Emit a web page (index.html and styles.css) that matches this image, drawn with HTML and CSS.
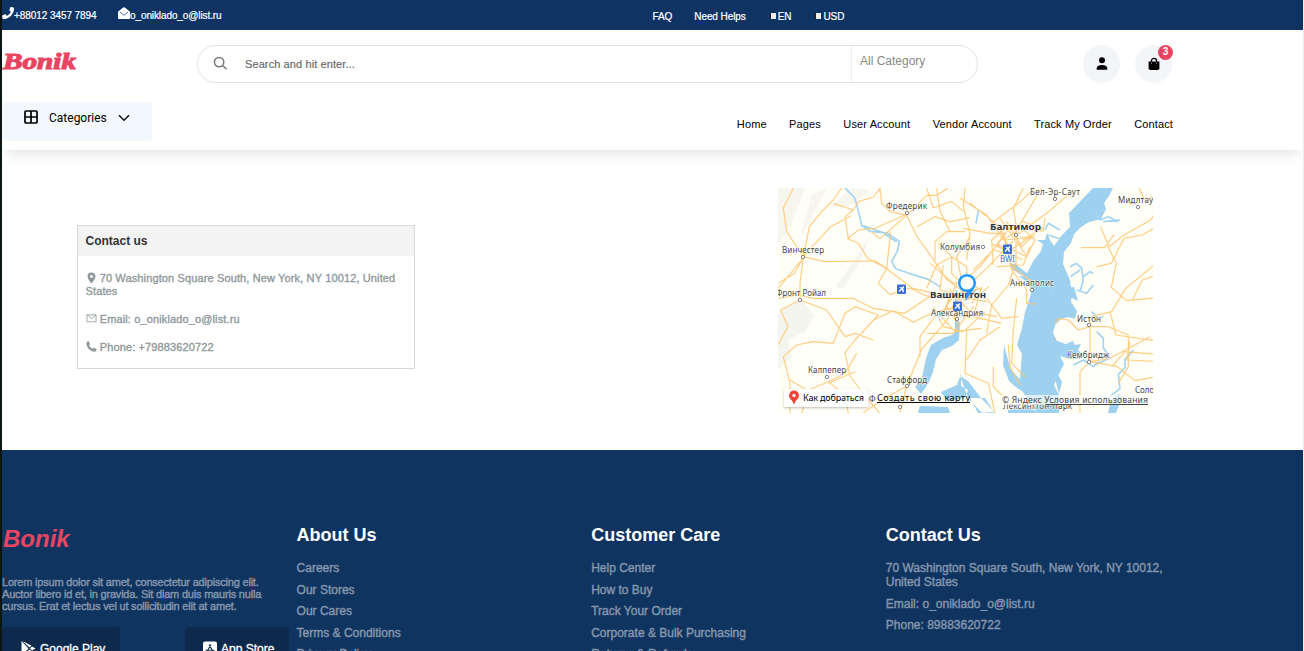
FILE: index.html
```html
<!DOCTYPE html>
<html lang="en">
<head>
<meta charset="utf-8">
<title>Bonik - Contact us</title>
<link rel="stylesheet" href="styles.css">
</head>
<body>
<div class="page">
  <div class="topbar">
    <div class="top-left">
      <span class="top-phone"><svg class="ic-phone" viewBox="0 0 512 512"><path fill="currentColor" d="M493 25 389 1c-11-3-23 3-27 14l-48 112c-4 10-2 22 7 29l60 49c-36 77-98 139-176 176l-49-60c-7-9-19-12-29-7L15 362C4 366-2 378 1 389l24 104c3 11 12 19 24 19 256 0 463-207 463-463 0-12-8-21-19-24z"/></svg><span>+88012 3457 7894</span></span>
      <span class="top-mail"><svg class="ic-open" viewBox="0 0 512 512"><path fill="currentColor" d="M0 200 190 40q66-60 132 0l190 160v270q0 42-42 42H42Q0 512 0 470z"/><path d="m90 220 135 110q31 24 62 0l135-110" fill="none" stroke="#0f3460" stroke-width="32"/></svg><span>o_oniklado_o@list.ru</span></span>
    </div>
    <div class="top-right"><span>FAQ</span><span>Need Helps</span><span class="flagged"><i></i>EN</span><span class="flagged"><i></i>USD</span></div>
  </div>
  <header class="header">
    <div class="head-row">
      <svg class="logo" viewBox="0 0 76 30"><text x="1" y="22" textLength="73" lengthAdjust="spacingAndGlyphs">Bonik</text></svg>
      <div class="search">
        <svg viewBox="0 0 16 16" class="ic-search"><circle cx="6.5" cy="6.5" r="5"/><path d="m10.2 10.2 4.2 4"/></svg>
        <span class="placeholder">Search and hit enter...</span>
        <span class="category">All Category</span>
      </div>
      <div class="actions">
        <span class="round"><svg viewBox="0 0 12 14"><circle cx="6" cy="3.3" r="3"/><path d="M.7 12.800v-1.300q0-3.600 5.300-3.600t5.300 3.600v1.300z"/></svg></span>
        <span class="round"><svg viewBox="0 0 12 14"><path d="M3.4 5.500V4a2.600 2.600 0 0 1 5.200 0v1.500" fill="none" stroke="#000" stroke-width="1.300"/><path d="M.6 4.500h10.800v6.700q0 1.800-1.800 1.800H2.400Q.6 13 .6 11.200z"/><path d="M3.500 5.500v1M8.500 5.500v1" stroke="#fff" stroke-width=".7"/></svg><b class="badge">3</b></span>
      </div>
    </div>
    <div class="nav-row">
      <div class="categories">
        <svg class="ic-grid" viewBox="0 0 14 14"><rect x="1" y="1" width="12" height="12" rx="1"/><path d="M7 1v12M1 7h12"/></svg>
        <span>Categories</span>
        <svg class="ic-chev" viewBox="0 0 12 8"><path d="m1 1.200 5 5 5-5"/></svg>
      </div>
      <nav class="nav"><span>Home</span><span>Pages</span><span>User Account</span><span>Vendor Account</span><span>Track My Order</span><span>Contact</span></nav>
    </div>
  </header>
  <main class="main">
    <section class="card">
      <h2>Contact us</h2>
      <div class="card-body">
        <p><svg class="ic-card" viewBox="0 0 11 13"><path fill="currentColor" fill-rule="evenodd" d="M5.500.5A4.300 4.300 0 0 0 1.200 4.800C1.200 7.500 5.500 12.500 5.500 12.500s4.300-5 4.300-7.700A4.300 4.300 0 0 0 5.500.5zm0 2.700a1.600 1.600 0 1 1 0 3.200 1.600 1.600 0 0 1 0-3.200z"/></svg> 70 Washington Square South, New York, NY 10012, United<br>States</p>
        <p><svg class="ic-card" viewBox="0 0 11 13"><path fill="none" stroke="currentColor" stroke-width=".9" d="M.6 2h9.800v7.500H.6zl4.900 4 4.900-4"/></svg> Email: o_oniklado_o@list.ru</p>
        <p><svg class="ic-card" viewBox="0 0 11 13"><path fill="currentColor" d="M.1 1.500Q1 0 2.400.2L4 3.400 2.700 4.600q1 2.200 3.600 3.700l1.300-1.200 3.300 1.700q.4 2.200-1.800 2.900C4.500 11.800-.6 6.800.1 1.500z"/></svg> Phone: +79883620722</p>
      </div>
    </section>
    <svg class="map" viewBox="778 188 375 225">
      <rect x="778" y="188" width="375" height="225" fill="#fffef7"/>
      <!-- hills -->
      <g transform="translate(770 180) scale(.33333)" class="hill">
        <path d="M24 24h80l-20 60-30 70-30 35zM125 45l45-20-30 60-30 55-20 35zM300 165l-45 75-60 80 25 5 50-80zM240 24l60 5-50 45-70 10z"/>
        <path d="M24 395l70-35 40 45-30 50-50 25 10 50-40 40z"/>
      </g>
      <!-- bay and rivers -->
      <g class="water">
        <path d="M1093 188h20l-4 8-5 7 2 6-5 10-12 3-8 5-7 7-3 9-7 9-1 12 7 16 2 14-1 8 6 9-2 8-7-2-7 2-6 6-2 8 4 8 9 3 7-3 3 8 7 5-5 5-8 0-10-3 4 8-5 10-5 11 5 10 0 20-1 10-14 0-4-10-11-12-7-13-2-13 2-23-5-9 5-17 3-16 4-12 3-10-4-10-8-6-7-4-4-7 6 1 12 9 7-13 7-9 2-7-6-4 8 0 2-7 3 7 4 6 8-11 8-8-1-14z"/>
        <path d="M1039 290l-6 1-7-10-8-5 9 1 7 6 6-1zM1051 290l10 12 9-5 8 4-4-14zM1060 352l-2-11 9 5 14-2-6 12-8 0zM1064 364l-7 9 5 9-3 12-5-20z"/>
        <path d="M955 320l5 2-1 18-7 6-10 4-6 9-3 13-5 12-7 10-6-7 7-9 4-20 5-13 12-7 9-3 3-3z"/>
        <path d="M1004 345l4 15 3 10 10 10 13 7 5 12-8-2-14-9-8-7-6-16zM941 392l16-7 4-11 0 12 7 4-3 8-18 3zM960 376l8 22 14 15 13 0-13-14-14-18zM970 398l15 0 9 14-16 1zM1008 410l20-3 12 6-32 0zM1108 413l3-13 8-6 3 4-6 15z"/>
        <path d="M920 406l28 1 2 6-32 0z"/>
      </g>
      <g transform="translate(770 180) scale(.33333)">
        <path class="river" style="stroke-width:5" d="M225 24l28 28 8 24 14 60 25 18 50 5 38 25-5 28-18 32 12 22 40 14 58 18 38 24M275 136l60 20 45 30M900 260l20-10 15 15 5 35-10 35M902 290l28-20M940 290l20-15 10 5M970 90l20 30 25-10 30 15M626 90l-8 40M965 395l20 20 15-6M980 455l20 20 0 28 20 30-40 20M910 555l30-15 30 20 15-15M1020 650l30-25-5-42 20-20 0-24 25-28M845 350l-5-45M560 330l-5 50 10 60M870 150l-35-20-10 20M880 180l-45-15M1000 125l50-5M920 330l30 10 20-25"/>
      </g>
      <!-- roads -->
      <g transform="translate(770 180) scale(.33333)" class="road">
        <path d="M70 24L40 85 50 155 100 230 118 140 155 95 190 60 215 24M24 310l50-30 26-50 82-90 60-32M24 326l78-95M100 230l65 15 150-2 35 22M190 70l60 20 15-25 45-14 20-25M250 90l-25 20 10 65 30-25 50-5 90-40M230 175l35 15 28 45 55 30M350 265l10-90 0-20M330 24l5 45 25 25 50 12M410 106l60-60 30 0 35-22M410 106l30 62 50 70 40 60 60 45M410 106l-80 70-25-20M440 140l55-30 45 15 60-12M350 265l-25 45 35 34 60-20 50 24 95 0M348 265l80 60 110 25M24 355l60-10 45 10 120 0 60 30 95 15 90-60 90 20M100 230l-10 80 0 50"/>
        <path d="M470 24l20 60 55-20 35 30M495 240l0-55 35-30 55 0M500 24l10 70 30 60M600 170l-40 60 15 70 60 30M505 190l40 40 0 50 35 35M470 325l30-70 45-25 45 30 0 70M480 250l70 60 60-10M520 255l-10 75 60 15"/>
        <path d="M590 240l10-80-20-80 5-56M570 55l80 50 50 75 38-25 75-130M740 165l90-65 80-70M740 145l-10-60 30-61M690 155l30 50 50 25 25-50-45-40-50 5zM590 320l60-55 80-82M580 305l50-45 75-95M700 160l25 110 45 60 0 40 30 2M680 260l80-5 20-55M600 70l70 55 30 30M670 255l-5-75 35-30M710 125l45 75 38-35M665 194l65 10 55-35M740 240l-25 75-50 60-15 85M690 215l50 55 60 45M740 145l80 8 5-39M580 145l80 15 45 0M665 130l80-60 50-46M610 270l60-60 20 5M758 180l60-35-65-22M707 180l75-10M727 135l-45 55 50 45M675 195l82 45M738 135l0 120M690 115l78 110"/>
        <path d="M1177 60l-35 60-80 45-45 35-25-60M1033 163l-30 40-70 0M1177 130l-60 35-55 10-38 75-44 10M1014 200l25 50-15 72 45 40 108-10M1177 235l-110 90-42 70-60 15M1177 280l-60 20-30 60M1108 24l15 35 54-18M1020 395l18 70 139 20M960 440l55 0 60 25 0 95-30 50M960 545l80 14 55 43 82-15M960 545l-30 30 0 60 0 64M1025 560l40-45 112 10M1080 485l-10 55 107 5M960 545l60-10 120-65M855 430l10-15 30 5 30 30 35-10M960 410l0 135"/>
        <path d="M24 495l30-55-22-50 58-30 80 30 55 80 29-10 56 20M60 700l0-90-20-80 40-35 50-10 60 5 35-90 30-20 70 25-70 75-30 38 15 70 45 60 65 75M95 700l20-70 60-25 50-25 35-60M110 630l-50-30M175 605l50 40 10 54M175 610l80-35M310 420l60-28 60 35 60-30 90-20M410 618l-20 80M410 618l45-110 70-80 35-50M470 460l80 0 60-80M490 380l30 60 60 15 65-60M550 350l-40 55 45 50 80-10M540 330l60 65 80 15M510 340l140 25M600 310l-60 80M635 320l-25 90 85 20M560 310l-30 70 40 60M520 405l20-60 95-20M605 370l50-50M650 355l45 60 50-5M450 530l0-60 45-60M410 618l-70 40-60 40M740 355l-10 95-5 100 40 40M715 495l5 65 30 55M590 450l-5 130 70 30 20 90M590 540l40-60 60-40M670 560l0 60 40 40"/>
      </g>
      <!-- place names -->
      <g class="place">
        <text x="1030" y="195" textLength="50">Бел-Эр-Саут</text><text x="1118" y="203" textLength="35">Мидлтау</text>
        <text x="886" y="209" textLength="41">Фредерик</text><text x="782" y="252.500" textLength="42">Винчестер</text>
        <text x="940" y="250" textLength="40">Колумбия</text><text x="776" y="296" textLength="50">Фронт Ройал</text>
        <text x="1010" y="286" textLength="44">Аннаполис</text><text x="1077" y="322" textLength="24">Истон</text>
        <text x="1067" y="358" textLength="42">Кембридж</text><text x="931" y="316" textLength="52">Александрия</text>
        <text x="808" y="373" textLength="38">Калпепер</text><text x="887" y="383" textLength="40">Стаффорд</text>
        <text x="1135" y="393">Соло</text><text x="869" y="402">Ф</text><text x="1003" y="409" textLength="69">Лексингтон-Парк</text>
        <text class="city" x="990" y="229.500" textLength="51" lengthAdjust="spacingAndGlyphs">Балтимор</text><text class="city" x="930" y="298" textLength="56" lengthAdjust="spacingAndGlyphs">Вашингтон</text>
        <text x="1000" y="262" textLength="15" style="fill:#4878c8">BWI</text>
      </g>
      <g class="dots"><circle cx="1055" cy="199" r="1.700"/><circle cx="1138" cy="207" r="1.700"/><circle cx="907" cy="213" r="1.700"/><circle cx="803" cy="257" r="1.700"/><circle cx="983" cy="247" r="1.700"/><circle cx="1016" cy="235" r="1.700"/><circle cx="800" cy="300" r="1.700"/><circle cx="1032" cy="290" r="1.700"/><circle cx="1089" cy="325" r="1.700"/><circle cx="1089" cy="362" r="1.700"/><circle cx="957" cy="319" r="1.700"/><circle cx="827" cy="377" r="1.700"/><circle cx="907" cy="386" r="1.700"/><circle cx="900" cy="407" r="1.700"/></g>
      <g id="plane"><rect x="897" y="284.500" width="9" height="9.500" rx="1.200" fill="#3d6fd0"/><path d="m899 291.500 5-5" stroke="#fff" stroke-width="1.200"/><path d="m899 287 4 .5 1 4-1 1-1.500-3.500zM898.500 290.500l1.500 1.500" fill="#fff"/></g>
      <use href="#plane" x="106" y="-40"/><use href="#plane" x="56" y="17"/>
      <path d="M966 301q1-5 6-9l5-3q-3 7-11 12z" fill="#777" opacity=".4"/>
      <path d="m965 301 2-10 7-2z" fill="#1e98ff"/><circle cx="967" cy="283" r="7.800" fill="#fff" stroke="#1e98ff" stroke-width="2.500"/>
      <rect x="1001" y="395" width="147" height="10" fill="#fff" opacity=".65"/>
      <rect x="784" y="389" width="84.500" height="18" rx="1.500" class="route"/>
      <path d="M794 404.500q-1-3.500-3.500-5.500a5 5 0 1 1 7 0q-2.500 2-3.500 5.500z" fill="#f44336"/><circle cx="794" cy="395.500" r="1.700" fill="#fff"/>
      <text class="maplink" x="803" y="401" textLength="61">Как добраться</text>
      <text class="maplink" x="877" y="401" textLength="93">Создать свою карту</text><path d="M877 402.500h93" stroke="#000"/>
      <text class="terms" x="1002" y="403" textLength="146">© Яндекс Условия использования</text><path d="M1045.500 404.500h102.500" stroke="#444"/>
    </svg>
  </main>
  <footer class="footer">
    <div class="col brand">
      <div class="foot-logo">Bonik</div>
      <p>Lorem ipsum dolor sit amet, consectetur adipiscing elit.<br>Auctor libero id et, in gravida. Sit diam duis mauris nulla<br>cursus. Erat et lectus vel ut sollicitudin elit at amet.</p>
      <div class="stores">
        <span class="store play"><svg viewBox="0 0 15 15"><path fill="#fff" d="M1 0v15L8 7.500zM2 0l7 6.500 2-1.700zM9 8.500 2 15l9-5zM11.500 5.500 9.500 7.500l2 2L15 7.500z"/></svg>Google Play</span>
        <span class="store"><svg viewBox="0 0 14 14"><rect width="14" height="14" rx="2" fill="#fff"/><path d="m6 3 4.500 8M8 3 3.500 11M2.500 8.700h9" stroke="#0d2a4d" stroke-width="1.100"/></svg>App Store</span>
      </div>
    </div>
    <div class="col"><h3>About Us</h3><p>Careers</p><p>Our Stores</p><p>Our Cares</p><p>Terms &amp; Conditions</p><p>Privacy Policy</p></div>
    <div class="col"><h3>Customer Care</h3><p>Help Center</p><p>How to Buy</p><p>Track Your Order</p><p>Corporate &amp; Bulk Purchasing</p><p>Returns &amp; Refunds</p></div>
    <div class="col"><h3>Contact Us</h3><p>70 Washington Square South, New York, NY 10012,<br>United States</p><p>Email: o_oniklado_o@list.ru</p><p>Phone: 89883620722</p></div>
  </footer>
</div>
</body>
</html>
```
FILE: styles.css
```css
* { box-sizing: border-box; }
body { margin: 0; overflow: hidden; font-family: "Liberation Sans", Arial, sans-serif; }
svg { flex: none; }
p, h2, h3 { margin: 0; }
.page { height: 651px; overflow: hidden; display: flex; flex-direction: column; border-left: 2px solid #0b1614; border-right: 1px solid #eee; background: #fff; }
.topbar { flex: none; height: 30px; background: #0f3464; color: #fff; display: flex; font-size: 10px; line-height: 12px; padding-top: 4px; -webkit-text-stroke: .2px #fff; }
.top-left { width: 650.500px; display: flex; }
.top-phone { width: 116px; display: flex; padding-top: 3px; }
.top-phone span, .top-mail span { padding-top: 3px; }
.top-mail { display: flex; padding-top: 3px; letter-spacing: -.1px; }
.top-phone span { letter-spacing: -.07px; }
.ic-phone { width: 12px; height: 12px; }
.ic-open { width: 12px; height: 12px; }
.top-right { display: flex; padding-top: 7px; letter-spacing: -.08px; }
.top-right span { margin-right: 22px; }
.top-right .flagged { display: flex; gap: 2px; padding-left: 2px; margin-right: 22px; }
.flagged i { width: 6px; height: 6px; margin-top: 2px; background: #eee; border: 1px solid #222; border-width: 0 0 0 1px; }
.header { flex: none; height: 120px; position: relative; background: #fff; box-shadow: 0 8px 12px -4px rgba(0,0,0,.11); }
.head-row { display: flex; align-items: flex-start; padding-top: 15px; height: 72px; }
.logo { width: 76px; height: 30px; margin-top: 2px; }
.logo text { font: italic bold 23px "Liberation Serif", serif; fill: #e94560; stroke: #e94560; stroke-width: 1.100px; }
.search { width: 781px; height: 38px; margin-left: 119px; border: 1px solid #e3e3e3; border-radius: 19px; display: flex; align-items: center; padding-left: 15px; }
.ic-search { width: 15px; height: 15px; fill: none; stroke: #777; stroke-width: 1.600; margin-top: -2px; }
.placeholder { flex: 1; font-size: 11px; color: #666; padding-left: 17px; letter-spacing: .1px; -webkit-text-stroke: .15px #666; }
.category { width: 126px; height: 36px; border-left: 1px solid #eee; padding: 8px 0 0 8px; font-size: 12px; line-height: 14px; color: #888; }
.actions { display: flex; gap: 15px; margin-left: 105px; }
.round { width: 37px; height: 38px; border-radius: 50%; background: #f3f5f9; display: grid; place-items: center; position: relative; }
.round svg { width: 12px; height: 14px; }
.badge { position: absolute; right: -1px; top: 0; width: 15px; height: 15px; border-radius: 50%; background: #e94560; color: #fff; font-size: 10px; line-height: 14px; text-align: center; }
.nav-row { display: flex; justify-content: space-between; padding-right: 130px; }
.categories { width: 150px; height: 39px; background: #f3f8fc; border-radius: 4px; display: flex; align-items: flex-start; padding: 8px 0 0 22px; font: 12px/16px Roboto, sans-serif; }
.categories span { padding-left: 11px; box-sizing: content-box; width: 58px; }
.ic-grid { width: 14px; height: 14px; fill: none; stroke: #000; stroke-width: 1.700; }
.ic-chev { width: 12px; height: 8px; fill: none; stroke: #111; stroke-width: 1.500; margin: 4px 0 0 11px; }
.nav { display: flex; gap: 22.400px; font-size: 11px; line-height: 13px; padding-top: 16px; color: #000; letter-spacing: .13px; }
.main { flex: none; height: 300px; display: flex; align-items: flex-start; padding: 38px 0 0 75px; }
.card { width: 338px; height: 144px; margin-top: 37px; border: 1px solid #d8d8d8; }
.card h2 { height: 30px; background: #f3f3f3; padding: 8px 0 0 7.500px; font-size: 12px; line-height: 14px; color: #333; font-weight: 600; }
.card-body { padding: 16px 0 0 7.500px; font-size: 11px; line-height: 13px; color: #8f999b; -webkit-text-stroke: .35px #8f999b; white-space: nowrap; letter-spacing: .13px; }
.card p { margin-bottom: 15px; }
.ic-card { width: 11px; height: 12px; margin: -3px 0 -1px; vertical-align: -1px; }
.map { width: 375px; height: 225px; margin-left: 363px; overflow: hidden; }
.hill { fill: #eeeee9; opacity: .55; }
.water { fill: #9dd1ef; }
.river { fill: none; stroke: #a3d4f0; stroke-linejoin: round; }
.road { fill: none; stroke: #ffc56e; stroke-width: 3.500; stroke-linejoin: round; opacity: .85; }
.place text { font: 8px "Noto Sans", sans-serif; fill: #444; paint-order: stroke; stroke: #fffef7; stroke-width: 1px; }
.place .city { font: bold 9.500px "Noto Sans", sans-serif; fill: #333; }
.dots { fill: #fff; stroke: #666; stroke-width: .8; }
.route { fill: #fff; filter: drop-shadow(0 1px 1px rgba(0,0,0,.25)); }
.maplink { font: 9px "Noto Sans", sans-serif; fill: #000; }
.terms { font: 8.500px "Noto Sans", sans-serif; fill: #444; }
.footer { flex: 1; min-height: 0; background: #0f3460; display: grid; grid-template-columns: repeat(4, 294.600px); padding-top: 75px; overflow: hidden; }
.col { color: #8596ad; font-size: 12px; line-height: 14px; white-space: nowrap; -webkit-text-stroke: .4px #8596ad; }
.col h3 { color: #fff; font-size: 18px; line-height: 21px; margin-bottom: 15px; -webkit-text-stroke: 0; }
.col p { margin-bottom: 7.600px; }
.foot-logo { font-size: 24px; line-height: 27px; padding-left: 1px; font-weight: bold; font-style: italic; color: #e94560; -webkit-text-stroke: 0; }
.brand .foot-logo { margin-bottom: 24px; }
.brand p { font-size: 11px; line-height: 12px; margin-bottom: 15px; letter-spacing: -.2px; }
.stores { display: flex; justify-content: space-between; width: 287px; }
.store { height: 44px; width: 104px; background: #0d2a4d; border-radius: 4px; color: #fff; display: flex; gap: 4px; align-items: center; padding: 0 0 1px 18px; -webkit-text-stroke: .3px #fff; }
.store svg { width: 14px; height: 15px; }
.play { width: 118px; }
.play svg { width: 16px; }
```
